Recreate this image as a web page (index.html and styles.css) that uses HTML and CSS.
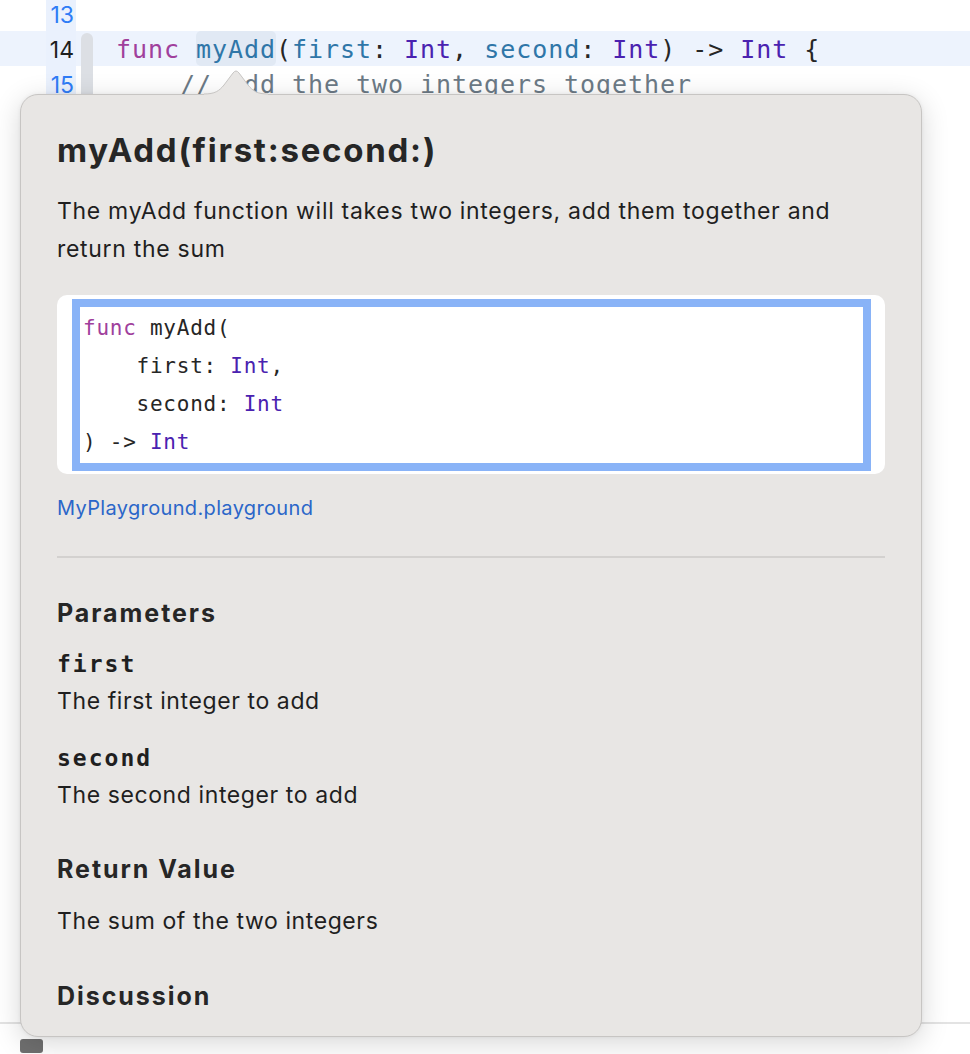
FILE: index.html
```html
<!DOCTYPE html>
<html>
<head>
<meta charset="utf-8">
<link rel="stylesheet" href="styles.css">
</head>
<body>
<div class="editor">
  <div class="line">
    <div class="num blue">13</div>
    <div class="ribbon-cell"></div>
    <div class="code"></div>
  </div>
  <div class="line current">
    <div class="num">14</div>
    <div class="ribbon-cell"><div class="ribbon top"></div></div>
    <div class="code"><span class="kw">func</span> <span class="decl hl">myAdd</span>(<span class="decl">first</span>: <span class="ty">Int</span>, <span class="decl">second</span>: <span class="ty">Int</span>) -&gt; <span class="ty">Int</span> {</div>
  </div>
  <div class="line">
    <div class="num blue">15</div>
    <div class="ribbon-cell"><div class="ribbon"></div></div>
    <div class="code"><span class="cm">    // Add the two integers together</span></div>
  </div>
  <div class="filler"></div>
  <div class="bottom-rule"></div>
  <div class="status-chip"></div>
</div>

<svg class="arrow" width="64" height="27" viewBox="0 0 64 27">
  <path d="M0 26 C11 26 15 23 20 17 L29 5 Q32 1 35 5 L44 17 C49 23 53 26 64 26 L64 27 L0 27 Z" fill="#e8e6e4"/>
  <path d="M0 26 C11 26 15 23 20 17 L29 5 Q32 1 35 5 L44 17 C49 23 53 26 64 26" fill="none" stroke="#c7c5c3" stroke-width="1"/>
</svg>

<div class="popover">
  <h1 class="title">myAdd(first:second:)</h1>
  <p class="desc">The myAdd function will takes two integers, add them together and return the sum</p>
  <div class="decl-box">
    <div class="decl-focus">
      <div class="decl-line"><span class="kw">func</span> myAdd(</div>
      <div class="decl-line">    first: <span class="ty">Int</span>,</div>
      <div class="decl-line">    second: <span class="ty">Int</span></div>
      <div class="decl-line">) -&gt; <span class="ty">Int</span></div>
    </div>
  </div>
  <a class="file-link">MyPlayground.playground</a>
  <div class="divider"></div>
  <h2 class="section">Parameters</h2>
  <div class="param-name">first</div>
  <p class="param-desc">The first integer to add</p>
  <div class="param-name second">second</div>
  <p class="param-desc">The second integer to add</p>
  <h2 class="section rv">Return Value</h2>
  <p class="rv-desc">The sum of the two integers</p>
  <h2 class="section disc">Discussion</h2>
</div>
</body>
</html>
```
FILE: styles.css
```css
html, body {
  margin: 0;
  padding: 0;
  background: #ffffff;
  overflow: hidden;
}
body {
  width: 970px;
  height: 1054px;
  position: relative;
  font-family: Inter, "Noto Sans", sans-serif;
  color: #262626;
}

/* editor */
.editor {
  margin-top: -4px;
}
.line {
  display: flex;
  height: 35px;
  align-items: stretch;
}
.line.current {
  background: #edf3fd;
}
.num {
  width: 30px;
  margin-left: 46px;
  background: #eaf1fd;
  text-align: right;
  font-family: Inter, sans-serif;
  font-size: 23px;
  line-height: 38px;
  color: #1f1f1f;
  box-sizing: border-box;
  padding-right: 2px;
}
.num.blue {
  color: #2f7cf6;
}
.ribbon-cell {
  width: 12px;
  margin-left: 5px;
  margin-right: 25px;
}
.ribbon {
  background: #dcdfe4;
  width: 12px;
  height: 100%;
}
.ribbon.top {
  margin-top: 2px;
  height: calc(100% - 2px);
  border-radius: 6px 6px 0 0;
}
.code {
  margin-left: -2px;
  font-family: "DejaVu Sans Mono", "Liberation Mono", monospace;
  font-size: 25px;
  letter-spacing: 0.95px;
  line-height: 37px;
  white-space: pre;
  color: #262626;
}
.kw { color: #a0409c; }
.decl { color: #2f76a8; }
.ty { color: #4a22b0; }
.cm { color: #6c7a86; }
.hl {
  background: #e1e9f4;
  border-radius: 5px;
  display: inline-block;
  height: 35px;
  vertical-align: top;
}
.filler {
  height: 921px;
}
.bottom-rule {
  height: 2px;
  background: #e3e3e3;
}
.status-chip {
  margin-top: 15px;
  margin-left: 20px;
  width: 23px;
  height: 14px;
  background: #6f6f6f;
  border-radius: 3px;
}

/* popover */
.arrow {
  position: absolute;
  left: 204px;
  top: 68px;
  z-index: 3;
}
.popover {
  position: absolute;
  left: 20px;
  top: 94px;
  width: 902px;
  height: 943px;
  box-sizing: border-box;
  background: #e8e6e4;
  border: 1px solid #c7c5c3;
  border-radius: 18px;
  box-shadow: 0 6px 28px rgba(0, 0, 0, 0.16), 0 0 4px rgba(0, 0, 0, 0.06);
  padding: 35px 36px 0 36px;
  z-index: 2;
  overflow: hidden;
}
.title {
  margin: 0;
  font-size: 33px;
  line-height: 40px;
  font-weight: 700;
  letter-spacing: 1.75px;
  color: #262626;
}
.desc {
  margin: 22px 0 0 0;
  font-size: 23px;
  line-height: 38px;
  letter-spacing: 0.7px;
  width: 800px;
  color: #1f1f1f;
}
.decl-box {
  margin-top: 27px;
  background: #ffffff;
  border-radius: 10px;
  padding: 4px 14px 3px 15px;
}
.decl-focus {
  border: 8px solid #89b3f7;
  background: #ffffff;
  padding: 2px 4px 2px 3px;
}
.decl-line {
  font-family: "DejaVu Sans Mono", "Liberation Mono", monospace;
  font-size: 21px;
  letter-spacing: 0.75px;
  line-height: 38px;
  height: 38px;
  white-space: pre;
  color: #262626;
}
.file-link {
  display: block;
  margin-top: 22px;
  font-size: 20px;
  line-height: 24px;
  letter-spacing: 0.35px;
  color: #2b66c9;
}
.divider {
  margin-top: 36px;
  height: 2px;
  background: #d3d1cf;
}
.section {
  margin: 40px 0 0 0;
  font-size: 25px;
  line-height: 30px;
  font-weight: 700;
  letter-spacing: 1.95px;
  color: #262626;
}
.param-name {
  margin-top: 21px;
  font-family: "DejaVu Sans Mono", "Liberation Mono", monospace;
  font-weight: 700;
  font-size: 23px;
  letter-spacing: 2px;
  line-height: 30px;
  color: #1f1f1f;
}
.param-name.second {
  margin-top: 27px;
}
.param-desc {
  margin: 7px 0 0 0;
  font-size: 23px;
  line-height: 30px;
  letter-spacing: 0.6px;
  color: #1f1f1f;
}
.section.rv {
  margin-top: 44px;
}
.rv-desc {
  margin: 22px 0 0 0;
  font-size: 23px;
  line-height: 30px;
  letter-spacing: 0.6px;
  color: #1f1f1f;
}
.section.disc {
  margin-top: 45px;
}
```
